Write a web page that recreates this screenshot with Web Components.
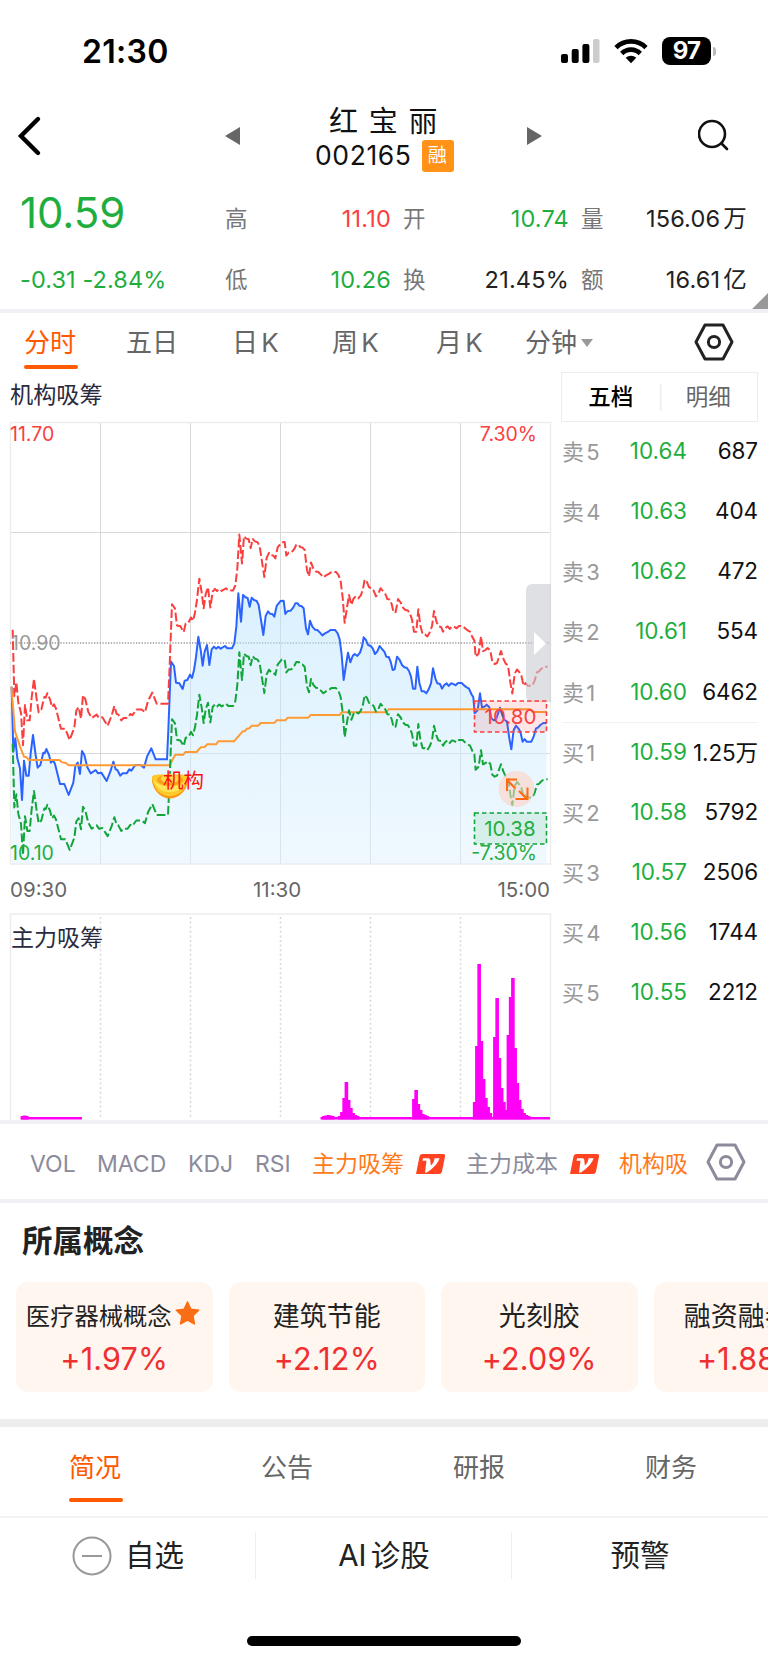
<!DOCTYPE html>
<html lang="zh-CN">
<head>
<meta charset="utf-8">
<title>红宝丽 002165</title>
<style>
  body {
    margin: 0;
    width: 768px;
    height: 1663px;
    overflow: hidden;
    background: #fff;
    color: #222;
    font-family: Inter, "Noto Sans CJK SC", sans-serif;
    --up: #fb3e3e;
    --down: #1fae3e;
    --accent: #ff5a00;
    --line: #f0f0f5;
  }
</style>
</head>
<body>
<stock-page></stock-page>

<script>
function define(name, html, setup) {
  const template = document.createElement('template');
  template.innerHTML = html;

  customElements.define(name, class extends HTMLElement {
    constructor() {
      super();
      this.attachShadow({ mode: 'open' });
    }

    connectedCallback() {
      if(this._hasSetup) return;
      this._hasSetup = true;
      this.shadowRoot.appendChild(template.content.cloneNode(true));
      if(setup) setup(this, this.shadowRoot);
    }
  });
}

define('status-bar', `
  <style>
    :host {
      display: flex;
      align-items: center;
      justify-content: space-between;
      box-sizing: border-box;
      height: 102px;
      padding: 0 52px 0 82px;
      color: #000;
    }
    time { font-size: 32px; font-weight: 600; letter-spacing: 0.3px; }
    .icons { display: flex; align-items: center; }
    .battery {
      width: 49px;
      height: 28px;
      margin-left: 14px;
      border-radius: 8px;
      background: #000;
      color: #fff;
      font: 700 24px/28px Inter, sans-serif;
      text-align: center;
      letter-spacing: -0.8px;
    }
    .nub { width: 3px; height: 9px; margin-left: 2px; border-radius: 0 3px 3px 0; background: #bbb; }
  </style>
  <time>21:30</time>
  <div class="icons">
    <svg width="39" height="26" viewBox="0 0 39 26">
      <rect x="0" y="16" width="7" height="9" rx="2"/>
      <rect x="10.7" y="11" width="7" height="14" rx="2"/>
      <rect x="21.4" y="6" width="7" height="19" rx="2"/>
      <rect x="32" y="1" width="6.5" height="24" rx="2" fill="#ccc"/>
    </svg>
    <svg width="34" height="26" viewBox="0 0 34 26" style="margin-left:14px" fill="none" stroke="#000" stroke-width="4.6">
      <path d="M2 9.6C10.2 1.3 23.8 1.3 32 9.6"/>
      <path d="M7.7 15.5C13 10.3 21 10.3 26.3 15.5"/>
      <path d="M17 25.2l-5.3-5.5c3-2.7 7.6-2.7 10.6 0z" fill="#000" stroke="none"/>
    </svg>
    <div class="battery">97</div>
    <div class="nub"></div>
  </div>
`);

define('stock-nav', `
  <style>
    :host {
      display: grid;
      grid-template-columns: 225px 90px 212px 171px 1fr;
      align-items: center;
      height: 70px;
      color: #111;
    }
    svg { display: block; margin-top: -2px; }
    .title { white-space: nowrap; }
    .name { font-size: 29px; line-height: 35px; padding: 2px 0 0 14px; letter-spacing: 0.3px; word-spacing: 2px; }
    .code { display: flex; align-items: center; line-height: 33px; font-size: 26.5px; letter-spacing: 0.6px; gap: 10px; }
    .code b {
      width: 32px;
      height: 32px;
      border-radius: 3px;
      background: #ff9217;
      color: #fff;
      font-weight: 400;
      font-size: 19px;
      line-height: 31px;
      text-align: center;
    }
  </style>
  <svg width="44" height="44" viewBox="0 0 44 44"><path d="M38 5L21 22l17 17" fill="none" stroke="#000" stroke-width="4.4" stroke-linecap="round"/></svg>
  <svg width="15" height="18" viewBox="0 0 15 18"><path d="M0 9L15 0v18z" fill="#666"/></svg>
  <div class="title">
    <div class="name">红 宝 丽</div>
    <div class="code"><span>002165</span><b>融</b></div>
  </div>
  <svg width="15" height="18" viewBox="0 0 15 18"><path d="M15 9L0 0v18z" fill="#666"/></svg>
  <svg width="34" height="34" viewBox="0 0 34 34" fill="none" stroke="#111" stroke-width="2.6"><circle cx="14" cy="15" r="13"/><path d="M23.5 24.5l5.5 5.5" stroke-linecap="round"/></svg>
`);

define('quote-item', `
  <style>
    :host { display: flex; justify-content: space-between; font-size: 23.5px; line-height: 32px; letter-spacing: 0.2px; }
    .label { color: #777; font-size: 22.5px; }
    ::slotted(i) { font-style: normal; margin-left: 3px; }
    :host([trend=up]) .value { color: var(--up); }
    :host([trend=down]) .value { color: var(--down); }
  </style>
  <span class="label"><slot name="label"></slot></span>
  <span class="value"><slot></slot></span>
`);

define('quote-panel', `
  <style>
    :host {
      display: grid;
      grid-template-columns: 192px 166px 166px 166px;
      grid-template-rows: 60px 61px;
      column-gap: 12px;
      align-items: center;
      box-sizing: border-box;
      height: 141px;
      padding: 17px 0 0 21px;
      border-bottom: 4px solid var(--line);
      position: relative;
    }
    .price { color: var(--down); font-size: 42px; letter-spacing: -0.1px; margin: -14px 0 0 -1px; }
    .change { color: var(--down); font-size: 23.5px; letter-spacing: 0.1px; white-space: nowrap; margin-left: -1px; }
    .corner { position: absolute; right: 0; bottom: 0; }
  </style>
  <div class="price">10.59</div>
  <quote-item trend="up"><span slot="label">高</span>11.10</quote-item>
  <quote-item trend="down"><span slot="label">开</span>10.74</quote-item>
  <quote-item><span slot="label">量</span>156.06<i>万</i></quote-item>
  <div class="change">-0.31 -2.84%</div>
  <quote-item trend="down"><span slot="label">低</span>10.26</quote-item>
  <quote-item><span slot="label">换</span>21.45%</quote-item>
  <quote-item><span slot="label">额</span>16.61<i>亿</i></quote-item>
  <svg class="corner" width="16" height="16" viewBox="0 0 16 16"><path d="M16 0v16H0z" fill="#999"/></svg>
`);

define('hex-icon', `
  <style>
    :host { display: block; width: 40px; height: 38px; }
    svg { display: block; }
  </style>
  <svg width="40" height="38" viewBox="0 0 40 38" fill="none" stroke="currentColor" stroke-width="3" stroke-linejoin="round">
    <path d="M11 2h18l9 17-9 17H11L2 19z"/>
    <circle cx="20" cy="19" r="5.6"/>
  </svg>
`);

define('period-tabs', `
  <style>
    :host {
      display: grid;
      grid-template-columns: 101px 106px 100px 104px 89px 170px 1fr;
      height: 59px;
      box-sizing: border-box;
      padding-left: 25px;
      font-size: 26px;
      line-height: 60px;
      color: #666;
      white-space: nowrap;
      word-spacing: -4px;
    }
    .on { color: var(--accent); position: relative; left: -1px; }
    .on::after {
      content: '';
      position: absolute;
      left: 0;
      top: 52px;
      width: 54px;
      height: 4px;
      border-radius: 2px;
      background: var(--accent);
    }
    .menu { display: flex; align-items: center; gap: 4px; }
    hex-icon { color: #222; margin: 10px 0 0 -1px; }
  </style>
  <span class="on">分时</span>
  <span>五日</span>
  <span>日 K</span>
  <span>周 K</span>
  <span>月 K</span>
  <span class="menu">分钟<svg width="12" height="8" viewBox="0 0 12 8"><path d="M0 0h12L6 8z" fill="#999"/></svg></span>
  <hex-icon></hex-icon>
`);

// Price points, three units to a pixel.
const PRICE = [
  35,830, 40,1025, 46,985, 52,1045, 60,1075, 66,1170, 72,1052, 79,1097, 86,1097, 92,1030, 99,975, 107,1035,
  113,1073, 121,1065, 130,1028, 134,1030, 139,1017, 147,1035, 153,1058, 159,1050, 165,1062, 180,1122, 193,1122,
  206,1155, 220,1118, 226,1068, 233,1058, 240,1092, 246,1023, 253,1035, 262,1072, 272,1090, 287,1080, 294,1090,
  304,1088, 320,1113, 332,1082, 340,1055, 347,1078, 352,1080, 361,1097, 368,1090, 380,1090, 388,1078, 394,1082,
  406,1065, 422,1065, 432,1073, 441,1040, 454,1015, 467,1048, 501,1048, 505,960, 513,755, 522,768, 528,818,
  538,820, 548,837, 554,812, 562,810, 570,794, 576,804, 582,780, 588,742, 595,680, 602,720, 608,767, 614,725,
  621,705, 628,765, 635,718, 642,710, 648,716, 655,710, 662,716, 675,708, 682,715, 696,715, 703,700, 709,650,
  715,550, 723,635, 729,555, 736,562, 743,564, 749,590, 755,563, 762,570, 770,573, 776,585, 790,675, 797,618,
  804,604, 810,611, 817,612, 823,620, 830,588, 842,573, 851,572, 856,612, 863,603, 872,602, 880,592, 886,580,
  893,580, 898,587, 904,588, 911,595, 918,655, 924,673, 930,632, 937,650, 945,659, 952,660, 960,668, 967,676,
  975,670, 985,665, 991,660, 1005,660, 1013,670, 1019,688, 1025,735, 1031,810, 1038,765, 1044,728, 1051,757,
  1058,738, 1064,732, 1072,738, 1080,728, 1086,710, 1091,682, 1098,690, 1104,705, 1112,708, 1118,715, 1125,732,
  1132,724, 1139,708, 1146,717, 1153,725, 1159,740, 1166,741, 1172,755, 1178,780, 1184,778, 1191,740, 1199,750,
  1206,765, 1213,772, 1220,773, 1227,783, 1233,800, 1239,836, 1246,836, 1252,770, 1258,818, 1265,844, 1272,844,
  1279,850, 1286,838, 1293,820, 1299,775, 1306,805, 1312,820, 1320,822, 1326,836, 1333,825, 1340,820, 1346,828,
  1353,820, 1360,822, 1367,826, 1374,819, 1385,819, 1392,826, 1400,832, 1407,836, 1414,852, 1420,862, 1424,910,
  1433,900, 1440,850, 1446,893, 1453,890, 1460,884, 1468,892, 1474,925, 1481,931, 1488,928, 1494,910, 1500,893,
  1507,915, 1514,930, 1521,935, 1528,985, 1534,1018, 1541,960, 1548,947, 1555,955, 1561,965, 1568,995, 1574,987,
  1580,995, 1594,995, 1601,980, 1608,955, 1614,953, 1621,945, 1630,939, 1640,939
];

const AVERAGE = `34,830 40,900 45,965 52,985 60,1010 66,1025 72,1040 80,1042 86,1050 178,1050 186,1057 198,1059
  206,1066 510,1066 516,1052 526,1034 550,1034 556,1026 590,1026 602,1012 614,1011 622,1003 648,1003 655,994
  702,994 728,964 735,963 741,956 748,955 755,947 775,947 782,939 824,938 830,931 856,931 863,923 925,923
  932,915 1018,915 1026,907 1158,907 1166,898 1590,898 1598,906 1640,906`;

// Band around the price, side is -1 for the upper and 1 for the lower one.
function band(side) {
  let points = [];
  for(let i = 0; i < PRICE.length; i += 2) {
    let price = 10.9 - (PRICE[i + 1] - 699) / 829;
    points.push((PRICE[i] + 3) + ',' + (PRICE[i + 1] + side * price * 0.0192 * 829).toFixed(1));
  }
  return points.join(' ');
}

define('minute-chart', `
  <style>
    :host { display: block; }
    svg { display: block; font-size: 19.5px; }
    .grid { fill: none; stroke: #d8d8d8; stroke-width: 1; }
    .series { fill: none; stroke-width: 6; stroke-linejoin: round; }
  </style>
  <svg width="552" height="445" viewBox="0 420 552 445">
    <defs>
      <linearGradient id="area" x1="0" y1="0" x2="0" y2="1">
        <stop offset="0" stop-color="#b6e2fd" stop-opacity=".5"/>
        <stop offset="1" stop-color="#e0f2fe" stop-opacity=".5"/>
      </linearGradient>
    </defs>
    <path class="grid" d="M100.5 422v442M190.5 422v442M280.5 422v442M370.5 422v442M460.5 422v442M10 532.5h541M10 753.5h541"/>
    <rect x="10.5" y="422.5" width="540" height="441.5" fill="none" stroke="#ededed" stroke-width="1.5"/>
    <path d="M10 643h540" stroke="#999" stroke-width="1.3" stroke-dasharray="1.3 1.5"/>
    <g transform="translate(0 410) scale(.33333)">
      <polygon class="fill" fill="url(#area)"/>
      <polyline class="series price" stroke="#2b63ff"/>
      <polyline class="series" stroke="#ff9a35" points="${AVERAGE}"/>
      <polyline class="series upper" stroke="#fb3e3e" stroke-dasharray="26 9"/>
      <polyline class="series lower" stroke="#12a537" stroke-dasharray="26 9"/>
    </g>
    <text x="10" y="440.5" fill="#fb3e3e">11.70</text>
    <text x="537" y="440.5" fill="#fb3e3e" text-anchor="end">7.30%</text>
    <text x="11" y="650" fill="#999">10.90</text>
    <text x="10" y="860" fill="#1fae3e">10.10</text>
    <text x="537" y="860" fill="#1fae3e" text-anchor="end">-7.30%</text>

    <path d="M551 584h-19a6 6 0 0 0-6 6v106a6 6 0 0 0 6 6h19z" fill="#c9cbd0" fill-opacity=".6"/>
    <path d="M534 632l12 11.5-12 11.5z" fill="#fff"/>

    <g fill="none" stroke-width="1.6" stroke-dasharray="4.5 3">
      <rect x="474.5" y="701" width="72" height="31" stroke="#fb3e3e" fill="#fb3e3e" fill-opacity=".13"/>
      <rect x="474.5" y="813" width="72" height="31" stroke="#12a537" fill="#12a537" fill-opacity=".1"/>
    </g>
    <text x="510.5" y="723.5" font-size="20.5" fill="#fb3e3e" text-anchor="middle">10.80</text>
    <text x="510" y="836" font-size="20.5" fill="#1fae3e" text-anchor="middle">10.38</text>

    <circle cx="516.5" cy="789" r="18" fill="#ffd2c4" fill-opacity=".6"/>
    <path d="M507 791v-11.500h10M507 780l8.500 8.500M519 791l8.500 8.500M515.500 799h12V787.500" fill="none" stroke="#ff6a10" stroke-width="2"/>

    <path d="M152 777c2-3 9-2 18-2s16-1 18 2c1 10-7 21.500-18 21.500S151 787 152 777z" fill="#f79a12"/>
    <path d="M152 777c2-3 9-2 18-2s16-1 18 2c-1 11-8 19-18 19s-17-8-18-19z" fill="#ffcb2b"/>
    <path d="M153 779c5 10 29 10 34 0-3 9-9 13-17 13s-14-4-17-13z" fill="#ffe558"/>
    <ellipse cx="170" cy="780" rx="13" ry="5.500" fill="#f5a51c"/>
    <ellipse cx="170" cy="778.500" rx="9" ry="4.500" fill="#ffdc45"/>
    <text x="163" y="787.5" font-size="20.5" fill="#ff1010">机构</text>
  </svg>
`, (el, root) => {
  root.querySelector('.price').setAttribute('points', PRICE.join(' '));
  root.querySelector('.fill').setAttribute('points', '35,1363 ' + PRICE.join(' ') + ' 1640,1363');
  root.querySelector('.upper').setAttribute('points', band(-1));
  root.querySelector('.lower').setAttribute('points', band(1));
});

// Bar heights in pixels, listed from the given minute on.
const FLOW = [
  [4, [3, 3.5, 3]],
  [138, [3, 3.5, 4, 3.5, 3]],
  [145, [3, 7, 21, 37, 19, 11, 6, 4, 3]],
  [178, [20, 29, 15, 9, 5, 4, 3]],
  [205, [17, 73, 155, 78, 40, 21, 12, 6]],
  [214, [82, 121, 61, 31, 17, 9]],
  [220, [84, 122, 141, 71, 36, 19, 10, 6, 4, 3]]
];

define('flow-chart', `
  <style>
    :host { display: block; }
    svg { display: block; }
  </style>
  <svg width="552" height="207" viewBox="0 913 552 207">
    <rect x="10.5" y="914" width="540" height="210" fill="none" stroke="#ededed" stroke-width="1.5"/>
    <path d="M100.5 917v202M190.5 917v202M280.5 917v202M370.5 917v202M460.5 917v202" stroke="#d8d8d8" stroke-width="1.5" stroke-dasharray="2 2.6"/>
    <text x="11" y="945.5" font-size="23" fill="#2b2b40">主力吸筹</text>
    <g class="bars" fill="#ff00f6">
      <rect x="21" y="1117" width="61" height="2.5"/>
      <rect x="320.5" y="1117" width="229.5" height="2.5"/>
    </g>
  </svg>
`, (el, root) => {
  let d = '';
  for(let [start, heights] of FLOW) {
    heights.forEach((h, i) => {
      d += `M${11.6 + 2.25 * (start + i)} 1119.5v${-h - 0.5}h3.6v${h + 0.5}z`;
    });
  }
  let path = document.createElementNS('http://www.w3.org/2000/svg', 'path');
  path.setAttribute('d', d);
  root.querySelector('.bars').appendChild(path);
});

define('order-row', `
  <style>
    :host {
      display: grid;
      grid-template-columns: 36px 89px 1fr;
      align-items: center;
      height: 60.15px;
      font-size: 22.5px;
      color: #111;
      white-space: nowrap;
    }
    .label { color: #999; font-size: 22px; word-spacing: -4px; margin-top: -4px; }
    .price { color: var(--down); text-align: right; }
    .amount { text-align: right; justify-self: end; margin-left: -10px; letter-spacing: -0.1px; }
    .price, .amount { margin-top: -3px; }
  </style>
  <span class="label"><slot name="label"></slot></span>
  <span class="price"><slot name="price"></slot></span>
  <span class="amount"><slot></slot></span>
`);

define('order-book', `
  <style>
    :host { display: block; }
    .tabs {
      display: grid;
      grid-template-columns: 1fr 1fr;
      box-sizing: border-box;
      height: 50px;
      margin-left: -1px;
      border: 1.5px solid #ededed;
      font-size: 22.5px;
      line-height: 47px;
      text-align: center;
      color: #666;
    }
    .tabs b { font-weight: 500; color: #000; }
    .tabs span { background: linear-gradient(#ededed, #ededed) 0 11px / 1.5px 27px no-repeat; }
    hr { margin: -1px 0 0; border: 0; border-top: 1px solid #f2f2f2; }
  </style>
  <div class="tabs"><b>五档</b><span>明细</span></div>
  <div class="sell"></div>
  <hr>
  <div class="buy"></div>
`, (el, root) => {
  let rows = (cls, list) => {
    root.querySelector(cls).innerHTML = list.map(([label, price, amount]) =>
      `<order-row><span slot="label">${label}</span><span slot="price">${price}</span>${amount}</order-row>`
    ).join('');
  };
  rows('.sell', [
    ['卖 5', '10.64', '687'],
    ['卖 4', '10.63', '404'],
    ['卖 3', '10.62', '472'],
    ['卖 2', '10.61', '554'],
    ['卖 1', '10.60', '6462']
  ]);
  rows('.buy', [
    ['买 1', '10.59', '1.25万'],
    ['买 2', '10.58', '5792'],
    ['买 3', '10.57', '2506'],
    ['买 4', '10.56', '1744'],
    ['买 5', '10.55', '2212']
  ]);
});

define('chart-section', `
  <style>
    :host {
      display: grid;
      grid-template-columns: 552px 196px;
      column-gap: 10px;
      height: 748px;
      border-bottom: 4px solid var(--line);
    }
    .left { display: flex; flex-direction: column; }
    .title { height: 48px; line-height: 47px; padding-left: 10px; font-size: 23.2px; color: #2b2b40; }
    .times {
      display: grid;
      grid-template-columns: 1fr 52px 1fr;
      height: 48px;
      padding: 0 2px 0 10px;
      font-size: 20.5px;
      line-height: 50px;
      color: #666;
    }
    .times :nth-child(2) { margin-left: -1px; }
    .times :last-child { text-align: right; }
  </style>
  <div class="left">
    <div class="title">机构吸筹</div>
    <minute-chart></minute-chart>
    <div class="times"><span>09:30</span><span>11:30</span><span>15:00</span></div>
    <flow-chart></flow-chart>
  </div>
  <order-book></order-book>
`);

define('vip-mark', `
  <style>
    :host { display: block; }
    svg { display: block; }
  </style>
  <svg width="29" height="20" viewBox="0 0 29 20">
    <path d="M6 0h21q2.5 0 2 2.5l-3 15q-.6 2.5-3 2.5H0L3.5 2.500Q4 0 6 0z" fill="#ff4321"/>
    <path d="M7 4.200h5.500q1.500 0 1.700 1.500l.6 5.800q3.500-3 3.700-7.300h5q-1 6-12.500 14.300H9l1.500-11.800H6.500z" fill="#fff"/>
  </svg>
`);

define('indicator-bar', `
  <style>
    :host {
      display: grid;
      grid-template-columns: 67px 91px 67px 56px 154px 153px 88px 1fr;
      align-items: center;
      box-sizing: border-box;
      height: 79px;
      padding-left: 30px;
      border-bottom: 4px solid var(--line);
      font-size: 23px;
      color: #8b8b9c;
      white-space: nowrap;
    }
    span { margin-top: 4px; }
    .cjk { display: flex; align-items: center; gap: 12px; margin-top: 1px; padding-left: 1px; }
    vip-mark { margin-top: 3px; }
    .on { color: #ff7a1c; }
  </style>
  <span>VOL</span>
  <span>MACD</span>
  <span>KDJ</span>
  <span>RSI</span>
  <span class="cjk on">主力吸筹<vip-mark></vip-mark></span>
  <span class="cjk">主力成本<vip-mark></vip-mark></span>
  <span class="cjk on">机构吸</span>
  <hex-icon></hex-icon>
`);

define('concept-card', `
  <style>
    :host {
      flex: none;
      box-sizing: border-box;
      width: 196.5px;
      height: 110px;
      padding-top: 13px;
      border-radius: 12px;
      background: #fff6f0;
      text-align: center;
      white-space: nowrap;
    }
    .name { display: flex; align-items: center; justify-content: center; gap: 3px; height: 38px; font-size: 27px; color: #222; }
    .rate { font-size: 30.5px; line-height: 51px; color: #ef3030; letter-spacing: 0.2px; }
    svg { display: none; margin-top: -1px; }
    :host([compact]) .name { font-size: 24.3px; margin-left: -3px; }
    :host([starred]) svg { display: block; }
  </style>
  <div class="name">
    <slot></slot>
    <svg width="25" height="25" viewBox="0 0 24 24"><path d="M12 1l3.2 6.9 7.5 1-5.5 5.2 1.4 7.9L12 18.4 5.4 22l1.4-7.9L1.3 8.9l7.5-1z" fill="#fb6d14" stroke="#fb6d14" stroke-width="1.5" stroke-linejoin="round"/></svg>
  </div>
  <div class="rate"><slot name="rate"></slot></div>
`);

define('concept-list', `
  <style>
    :host { display: block; height: 216px; border-bottom: 8px solid #ededed; overflow: hidden; }
    h2 { margin: 0; padding-left: 22px; height: 79px; line-height: 75px; font-size: 30.5px; font-weight: 600; }
    .cards { display: flex; gap: 16px; padding-left: 16px; }
  </style>
  <h2>所属概念</h2>
  <div class="cards">
    <concept-card starred compact>医疗器械概念<span slot="rate">+1.97%</span></concept-card>
    <concept-card>建筑节能<span slot="rate">+2.12%</span></concept-card>
    <concept-card>光刻胶<span slot="rate">+2.09%</span></concept-card>
    <concept-card starred>融资融券<span slot="rate">+1.88%</span></concept-card>
  </div>
`);

define('info-tabs', `
  <style>
    :host {
      display: grid;
      grid-template-columns: repeat(4, 1fr);
      box-sizing: border-box;
      height: 91px;
      border-bottom: 2px solid #f2f2f2;
      font-size: 26px;
      line-height: 82px;
      text-align: center;
      color: #666;
    }
    span { position: relative; left: -1px; }
    .on { color: var(--accent); }
    .on::after {
      content: '';
      position: absolute;
      left: 70px;
      top: 71px;
      width: 54px;
      height: 4px;
      border-radius: 2px;
      background: var(--accent);
    }
  </style>
  <span class="on">简况</span>
  <span>公告</span>
  <span>研报</span>
  <span>财务</span>
`);

define('action-bar', `
  <style>
    :host { display: block; }
    .buttons {
      display: grid;
      grid-template-columns: repeat(3, 1fr);
      padding-top: 14px;
      font-size: 29.5px;
      word-spacing: -4px;
      color: #222;
    }
    .buttons div { display: flex; align-items: center; justify-content: center; height: 47px; }
    .buttons div + div { box-shadow: -1px 0 #eee; }
    .buttons span { margin: -5px 0 0; }
    svg { margin-right: 13px; }
    .home { width: 274px; height: 10px; margin: 57px auto 0; border-radius: 5px; background: #000; }
  </style>
  <div class="buttons">
    <div>
      <svg width="40" height="40" viewBox="0 0 40 40" fill="none" stroke="#999" stroke-width="2"><circle cx="20" cy="20" r="18.5"/><path d="M10 20h20"/></svg><span>自选</span>
    </div>
    <div><span>AI 诊股</span></div>
    <div><span>预警</span></div>
  </div>
  <div class="home"></div>
`);

define('stock-page', `
  <style>
    :host { display: block; width: 768px; }
  </style>
  <status-bar></status-bar>
  <stock-nav></stock-nav>
  <quote-panel></quote-panel>
  <period-tabs></period-tabs>
  <chart-section></chart-section>
  <indicator-bar></indicator-bar>
  <concept-list></concept-list>
  <info-tabs></info-tabs>
  <action-bar></action-bar>
`);
</script>
</body>
</html>
